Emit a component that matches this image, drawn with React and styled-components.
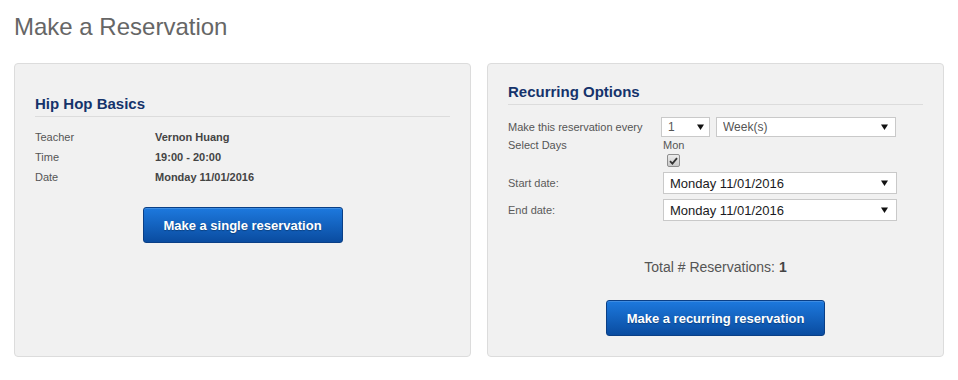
import React from 'react';
import styled, { createGlobalStyle } from 'styled-components';

const GlobalStyle = createGlobalStyle`
  html, body { margin: 0; padding: 0; background: #fff; }
  body { font-family: "Liberation Sans", Arial, sans-serif; }
`;

const Page = styled.div`
  padding: 13px 15px 0 14px;
`;

const Title = styled.h1`
  margin: 0 0 22px;
  font-size: 24px;
  line-height: 28px;
  font-weight: normal;
  color: #666;
`;

const Columns = styled.div`
  display: grid;
  grid-template-columns: 457px 457px;
  column-gap: 16px;
`;

const Panel = styled.section`
  display: flex;
  flex-direction: column;
  box-sizing: border-box;
  background: #f1f1f1;
  border: 1px solid #dcdcdc;
  border-radius: 4px;
  padding: ${(p) => p.$top}px 20px 20px 20px;
`;

const Heading = styled.h2`
  margin: 0;
  font-size: 15px;
  line-height: 20px;
  font-weight: bold;
  color: #15336b;
  padding-bottom: 2px;
  border-bottom: 1px solid #dcdcdc;
`;

const InfoList = styled.dl`
  display: grid;
  grid-template-columns: 120px 1fr;
  margin: 10px 0 0;
  font-size: 11px;
  line-height: 20px;
`;

const InfoLabel = styled.dt`
  color: #555;
`;

const InfoValue = styled.dd`
  margin: 0;
  color: #444;
  font-weight: bold;
`;

const Button = styled.button`
  align-self: center;
  width: ${(p) => p.$w}px;
  height: 36px;
  margin-top: ${(p) => p.$mt}px;
  border: 1px solid #0a3f86;
  border-radius: 3px;
  background: linear-gradient(#1d79de, #0a4ca0);
  box-shadow: inset 0 1px 0 rgba(255, 255, 255, 0.15);
  color: #fff;
  font-family: "Liberation Sans", Arial, sans-serif;
  font-size: 13px;
  font-weight: bold;
  text-shadow: 0 1px 1px rgba(0, 0, 0, 0.3);
  cursor: pointer;
  padding: 0;
`;

const FormRow = styled.div`
  display: flex;
  align-items: flex-start;
  margin-top: ${(p) => p.$mt}px;
`;

const FormLabel = styled.label`
  flex: 0 0 153px;
  font-size: 11px;
  line-height: ${(p) => p.$lh}px;
  color: ${(p) => p.$color || '#555'};
`;

const FieldGroup = styled.div`
  display: flex;
  flex-direction: ${(p) => (p.$column ? 'column' : 'row')};
  gap: 6px;
  margin-left: ${(p) => p.$indent || 0}px;
`;

const SelectWrap = styled.div`
  position: relative;
  width: ${(p) => p.$w}px;
  height: ${(p) => p.$h}px;
`;

const Select = styled.select`
  appearance: none;
  -webkit-appearance: none;
  box-sizing: border-box;
  width: 100%;
  height: 100%;
  margin: 0;
  padding: 0 20px 0 6px;
  border: 1px solid #c9c9c9;
  border-radius: 0;
  background: #fff;
  font-family: "Liberation Sans", Arial, sans-serif;
  font-size: ${(p) => p.$size}px;
  color: ${(p) => p.$color};
  outline: none;
`;

const Arrow = styled.svg`
  position: absolute;
  right: ${(p) => p.$right}px;
  top: 50%;
  margin-top: -3px;
  pointer-events: none;
`;

const DayList = styled.div`
  display: flex;
  flex-direction: column;
  align-items: flex-start;
`;

const DayName = styled.span`
  font-size: 11px;
  line-height: 14px;
  color: #555;
`;

const CheckBox = styled.span`
  box-sizing: border-box;
  display: flex;
  align-items: center;
  justify-content: center;
  width: 13px;
  height: 13px;
  margin: 2px 0 0 4px;
  border: 1px solid #8e8e8e;
  border-radius: 2px;
  background: linear-gradient(#ececec, #c9c9c9);
`;

const Total = styled.p`
  margin: 36px 0 0;
  text-align: center;
  font-size: 14px;
  line-height: 20px;
  color: #555;
`;

const Strong = styled.b`
  color: #444;
`;

function Dropdown({ w, h, size, color = '#555', right = 8, value, options }) {
  return (
    <SelectWrap $w={w} $h={h}>
      <Select $size={size} $color={color} defaultValue={value}>
        {options.map((o) => (
          <option key={o}>{o}</option>
        ))}
      </Select>
      <Arrow $right={right} width="7" height="6" viewBox="0 0 7 6">
        <path d="M0 0.5 H7 L3.5 6 Z" fill="#111" />
      </Arrow>
    </SelectWrap>
  );
}

export default function App() {
  return (
    <>
      <GlobalStyle />
      <Page>
        <Title>Make a Reservation</Title>
        <Columns>
          <Panel $top={30}>
            <Heading>Hip Hop Basics</Heading>
            <InfoList>
              <InfoLabel>Teacher</InfoLabel>
              <InfoValue>Vernon Huang</InfoValue>
              <InfoLabel>Time</InfoLabel>
              <InfoValue>19:00 - 20:00</InfoValue>
              <InfoLabel>Date</InfoLabel>
              <InfoValue>Monday 11/01/2016</InfoValue>
            </InfoList>
            <Button $w={200} $mt={20}>Make a single reservation</Button>
          </Panel>

          <Panel $top={18}>
            <Heading>Recurring Options</Heading>
            <FormRow $mt={12}>
              <FormLabel $lh={20}>Make this reservation every</FormLabel>
              <FieldGroup>
                <Dropdown w={49} h={20} size={12} right={6} value="1" options={['1', '2', '3', '4']} />
                <Dropdown w={180} h={20} size={12} value="Week(s)" options={['Day(s)', 'Week(s)', 'Month(s)']} />
              </FieldGroup>
            </FormRow>
            <FormRow $mt={1}>
              <FormLabel $lh={14}>Select Days</FormLabel>
              <FieldGroup $indent={2}>
                <DayList>
                  <DayName>Mon</DayName>
                  <CheckBox>
                    <svg width="9" height="8" viewBox="0 0 9 8">
                      <path d="M1 4.2 L3.4 6.6 L8 1.2" fill="none" stroke="#333" strokeWidth="1.8" />
                    </svg>
                  </CheckBox>
                </DayList>
              </FieldGroup>
            </FormRow>
            <FormRow $mt={5}>
              <FormLabel $lh={22} $color="#5a5a5a">Start date:</FormLabel>
              <FieldGroup $indent={2}>
                <Dropdown w={234} h={22} size={13} color="#1a1a22" right={9} value="Monday 11/01/2016" options={['Monday 11/01/2016']} />
              </FieldGroup>
            </FormRow>
            <FormRow $mt={5}>
              <FormLabel $lh={22} $color="#5a5a5a">End date:</FormLabel>
              <FieldGroup $indent={2}>
                <Dropdown w={234} h={22} size={13} color="#1a1a22" right={9} value="Monday 11/01/2016" options={['Monday 11/01/2016']} />
              </FieldGroup>
            </FormRow>
            <Total>
              Total # Reservations: <Strong>1</Strong>
            </Total>
            <Button $w={219} $mt={23}>Make a recurring reservation</Button>
          </Panel>
        </Columns>
      </Page>
    </>
  );
}
